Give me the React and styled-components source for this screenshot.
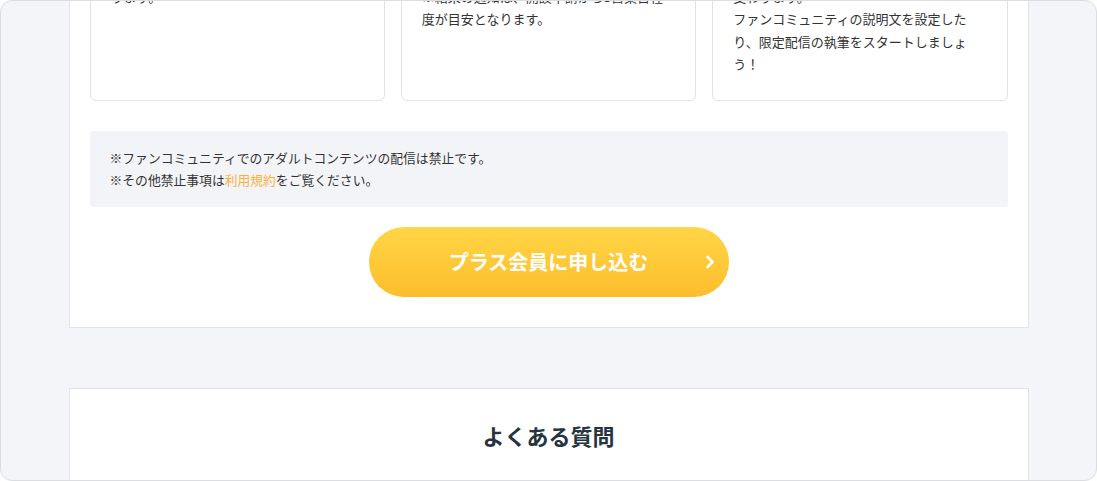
import React, { useLayoutEffect, useRef } from 'react';
import styled, { createGlobalStyle } from 'styled-components';

const GlobalStyle = createGlobalStyle`
  html, body {
    margin: 0;
    padding: 0;
    background: #ffffff;
  }
  body {
    font-family: "Noto Sans CJK JP", "Noto Sans", sans-serif;
    color: #333333;
  }
  * {
    box-sizing: border-box;
  }
`;

const steps = [
  {
    title: '申請する',
    paragraphs: ['必要事項を入力し送信すると審査が始まります。'],
  },
  {
    title: '審査結果を確認',
    paragraphs: ['審査後に結果をお知らせします。', '※結果の通知は、開設申請から3営業日程度が目安となります。'],
  },
  {
    title: '執筆をスタート',
    paragraphs: [
      '承認後、ファンコミュニティのプランが変わります。',
      'ファンコミュニティの説明文を設定したり、限定配信の執筆をスタートしましょう！',
    ],
  },
];

const SCROLL_OFFSET = 134;

const App = () => {
  const frameRef = useRef(null);

  useLayoutEffect(() => {
    if (frameRef.current) frameRef.current.scrollTop = SCROLL_OFFSET;
  }, []);

  return (
    <>
      <GlobalStyle />
      <Frame ref={frameRef}>
        <Panel>
          <StepGrid>
            {steps.map((step, index) => (
              <StepCard key={index}>
                <StepTitle>{step.title}</StepTitle>
                {step.paragraphs.map((text, i) => (
                  <StepText key={i}>{text}</StepText>
                ))}
              </StepCard>
            ))}
          </StepGrid>

          <Notice>
            <p>※ファンコミュニティでのアダルトコンテンツの配信は禁止です。</p>
            <p>
              ※その他禁止事項は<a href="#terms">利用規約</a>をご覧ください。
            </p>
          </Notice>

          <ApplyButton type="button">
            プラス会員に申し込む
            <Chevron viewBox="0 0 10 14" aria-hidden="true">
              <polyline points="2.5,2 7.5,7 2.5,12" />
            </Chevron>
          </ApplyButton>
        </Panel>

        <FaqPanel>
          <FaqTitle>よくある質問</FaqTitle>
          <FaqSpacer />
        </FaqPanel>
      </Frame>
    </>
  );
};

const Frame = styled.div`
  width: 100vw;
  height: 100vh;
  overflow: hidden;
  border: 1px solid #dcdde1;
  border-radius: 12px;
  background: #f4f5f8;
  padding-bottom: 60px;
`;

const Panel = styled.section`
  max-width: 960px;
  margin: 0 auto;
  background: #ffffff;
  border: 1px solid #e3e4e7;
  padding: 40px 20px 30px;
  display: flex;
  flex-direction: column;
  align-items: center;
`;

const StepGrid = styled.div`
  width: 100%;
  display: grid;
  grid-template-columns: repeat(3, 1fr);
  gap: 16px;
`;

const StepCard = styled.div`
  border: 1px solid #e1e2e5;
  border-radius: 6px;
  padding: 20px 30px 24px 20px;
  background: #ffffff;
`;

const StepTitle = styled.h3`
  margin: 0 0 10px;
  font-size: 16px;
  line-height: 24px;
  font-weight: 700;
  color: #263340;
`;

const StepText = styled.p`
  margin: 0;
  font-size: 13px;
  line-height: 22.5px;
  color: #333333;
`;

const Notice = styled.div`
  width: 100%;
  margin-top: 30px;
  padding: 16px 20px;
  background: #f3f4f8;
  border-radius: 4px;

  & > p {
    margin: 0;
    font-size: 12.8px;
    line-height: 22px;
    color: #333333;
  }

  & a {
    color: #fbb03b;
    text-decoration: none;
  }
`;

const ApplyButton = styled.button`
  position: relative;
  margin-top: 20px;
  width: 360px;
  height: 70px;
  border: none;
  border-radius: 35px;
  background: linear-gradient(180deg, #ffd646 0%, #fdbd2b 100%);
  color: #ffffff;
  font-family: "Noto Sans CJK JP", "Noto Sans", sans-serif;
  font-size: 20px;
  font-weight: 700;
  letter-spacing: 0;
  cursor: pointer;
  display: flex;
  align-items: center;
  justify-content: center;
`;

const Chevron = styled.svg`
  position: absolute;
  right: 14px;
  top: 50%;
  width: 10px;
  height: 14px;
  transform: translateY(-50%);
  fill: none;
  stroke: #ffffff;
  stroke-width: 2.6;
  stroke-linecap: round;
  stroke-linejoin: round;
`;

const FaqPanel = styled.section`
  max-width: 960px;
  margin: 60px auto 0;
  background: #ffffff;
  border: 1px solid #e3e4e7;
  padding: 30px 20px 40px;
`;

const FaqTitle = styled.h2`
  margin: 0;
  text-align: center;
  font-size: 22px;
  line-height: 33px;
  font-weight: 700;
  color: #263340;
`;

const FaqSpacer = styled.div`
  height: 200px;
`;

export default App;
